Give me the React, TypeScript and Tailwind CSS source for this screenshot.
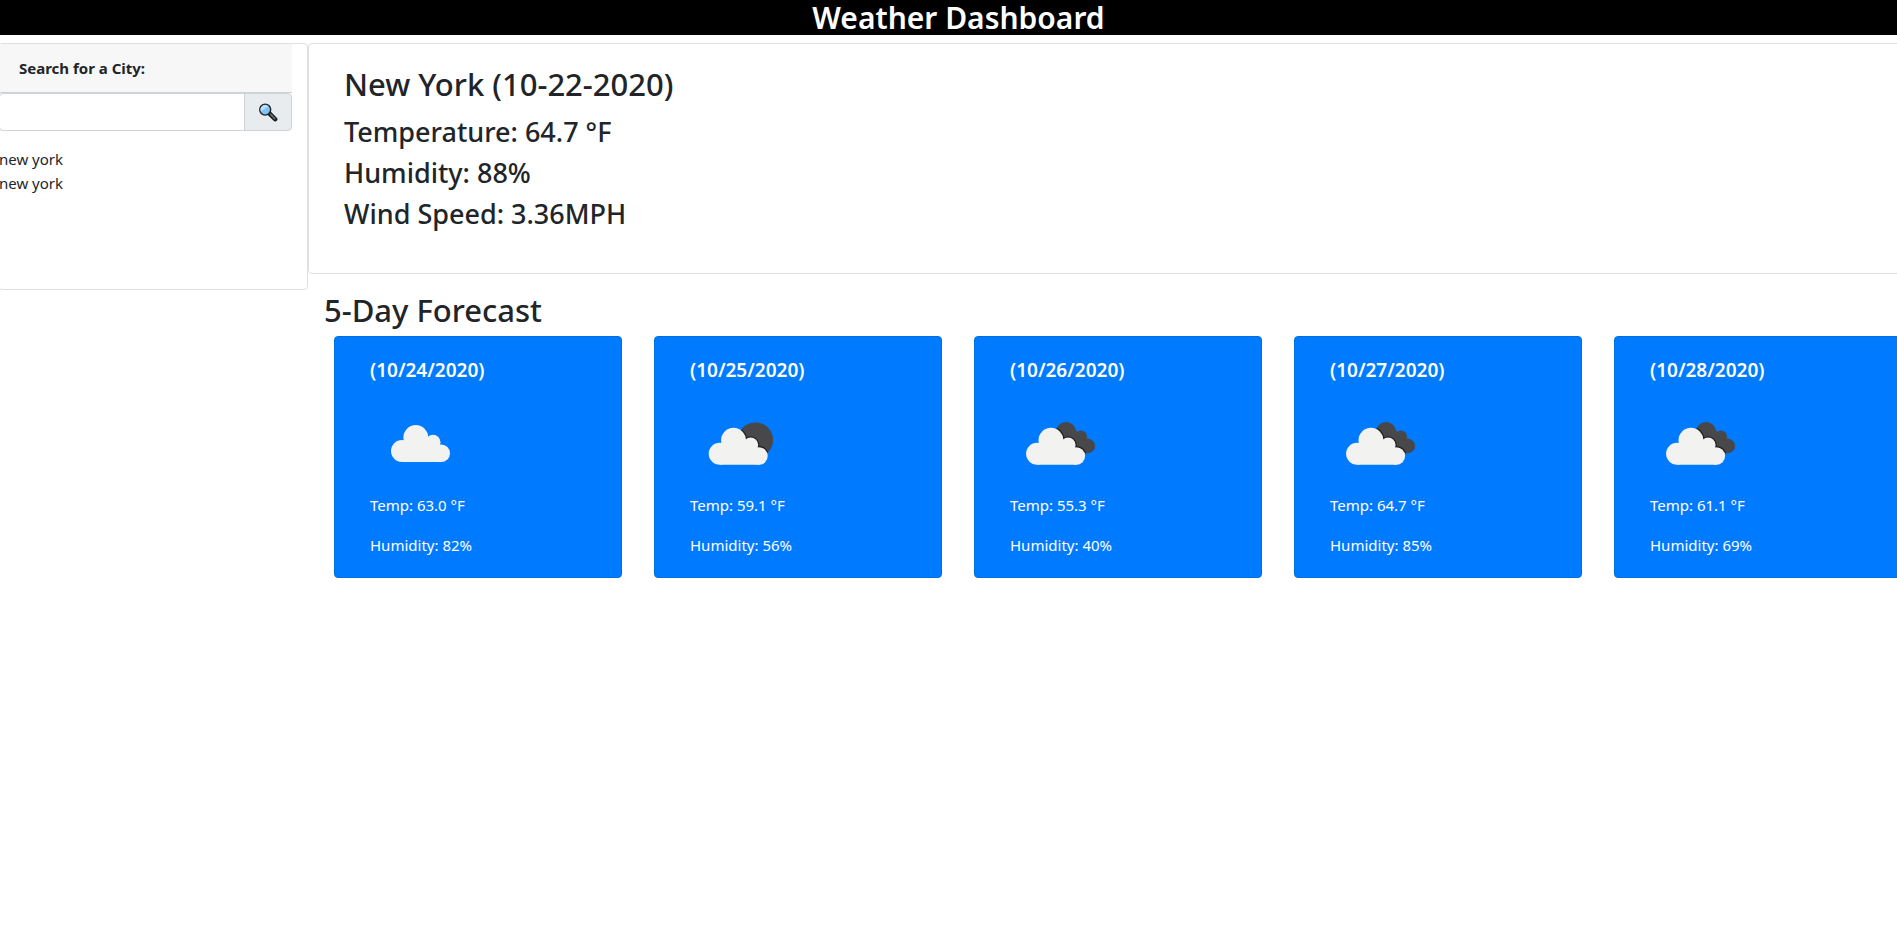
import { useState } from "react";

type Sky = "cloud" | "sun" | "broken";

const days: { date: string; sky: Sky; temp: string; humidity: string }[] = [
  { date: "(10/24/2020)", sky: "cloud", temp: "63.0", humidity: "82" },
  { date: "(10/25/2020)", sky: "sun", temp: "59.1", humidity: "56" },
  { date: "(10/26/2020)", sky: "broken", temp: "55.3", humidity: "40" },
  { date: "(10/27/2020)", sky: "broken", temp: "64.7", humidity: "85" },
  { date: "(10/28/2020)", sky: "broken", temp: "61.1", humidity: "69" },
];

function CloudShape() {
  return (
    <>
      <circle cx="32" cy="41" r="11" />
      <circle cx="45.8" cy="27.4" r="12.4" />
      <circle cx="63" cy="32.3" r="7.5" />
      <circle cx="71.2" cy="43.2" r="8.8" />
      <path d="M32 52V32H46L57 26L66 34L72 40V52Z" />
    </>
  );
}

function BackShape({ sky }: { sky: Sky }) {
  if (sky === "sun") return <circle cx="65.5" cy="30" r="17.6" />;
  return (
    <>
      <circle cx="56" cy="22.2" r="10.2" />
      <circle cx="70.8" cy="26.8" r="6.3" />
      <circle cx="78" cy="36" r="7.2" />
      <path d="M56 22L66 20L73 32L78 36V43.2H56Z" />
    </>
  );
}

function SkyIcon({ sky }: { sky: Sky }) {
  const offset =
    sky === "cloud" ? "translate(0 0)" : sky === "sun" ? "translate(-2.3 2.8)" : "translate(-4.9 2.8)";
  return (
    <svg width="100" height="70" viewBox="0 0 100 70" aria-hidden="true" className="block">
      {sky !== "cloud" && (
        <>
          <clipPath id={"back-" + sky}>
            <BackShape sky={sky} />
          </clipPath>
          <g fill="#48484a">
            <BackShape sky={sky} />
          </g>
          <g clipPath={"url(#back-" + sky + ")"}>
            <g transform={offset} fill="#222" stroke="#222" strokeWidth="2.6">
              <CloudShape />
            </g>
          </g>
        </>
      )}
      <g transform={offset} fill="#f2f2f0">
        <CloudShape />
      </g>
    </svg>
  );
}

function Magnifier() {
  return (
    <svg width="20" height="20" viewBox="0 0 20 20" aria-hidden="true">
      <path d="M11.6 11.6L17.2 17.2" stroke="#151515" strokeWidth="4.4" strokeLinecap="round" />
      <path d="M12.6 12.4L16.8 16.6" stroke="#5f706d" strokeWidth="2" strokeLinecap="round" />
      <circle cx="7.2" cy="7.6" r="5.5" fill="#83c3f3" stroke="#1c2226" strokeWidth="1.4" />
      <path d="M3 9.6A4.6 4.6 0 0 1 10.2 4.2Z" fill="#b9dffa" />
    </svg>
  );
}

export default function App() {
  const [city, setCity] = useState("");
  return (
    <div className="min-h-screen overflow-hidden bg-white font-['Noto_Sans','Open_Sans',sans-serif] text-[15px] leading-6 text-[#212529]">
      <header className="mb-2 bg-black pl-5 text-center text-white">
        <h1 className="text-[30px] leading-[35px] font-semibold">Weather Dashboard</h1>
      </header>

      <div className="flex items-start">
        <aside className="-ml-0.5 h-[247px] w-[310px] shrink-0 rounded border border-[#dfdfdf] pr-[15px]">
          <form onSubmit={(e) => e.preventDefault()}>
            <div className="border-b border-[#d0d2d4] bg-[#f7f7f7] px-5 py-3 font-bold">
              <label htmlFor="city">Search for a City:</label>
            </div>
            <div className="flex h-[38px]">
              <input
                id="city"
                value={city}
                onChange={(e) => setCity(e.target.value)}
                className="min-w-0 flex-1 rounded-l border border-[#ced4da] px-3 outline-none"
              />
              <button
                type="submit"
                aria-label="Search"
                className="-ml-px flex w-12 items-center justify-center rounded-r border border-[#ced4da] bg-[#e9ecef]"
              >
                <Magnifier />
              </button>
            </div>
          </form>
          <ul className="mt-4">
            <li>new york</li>
            <li>new york</li>
          </ul>
        </aside>

        <main className="min-w-0 flex-1">
          <section className="-mr-1 h-[231px] rounded border border-[#dfdfdf] px-[35px] py-[21px] font-medium">
            <h2 className="mb-3 text-[31px] leading-[38px]">New York (10-22-2020)</h2>
            <p className="mb-2 text-[27px] leading-[33px]">Temperature: 64.7 °F</p>
            <p className="mb-2 text-[27px] leading-[33px]">Humidity: 88%</p>
            <p className="text-[27px] leading-[33px]">Wind Speed: 3.36MPH</p>
          </section>

          <section className="pt-[17px] pl-4">
            <h2 className="mb-[7px] text-[31px] leading-[38px] font-medium">5-Day Forecast</h2>
            <div className="flex gap-8 pl-2.5">
              {days.map((day) => (
                <article
                  key={day.date}
                  className="w-[288px] shrink-0 rounded border border-[#006fe0] bg-[#007bff] px-[35px] pt-[21px] pb-5 text-white"
                >
                  <h3 className="mb-7 text-[19px] leading-6 font-semibold">{day.date}</h3>
                  <SkyIcon sky={day.sky} />
                  <p className="mt-[13px] mb-4">Temp: {day.temp} °F</p>
                  <p>Humidity: {day.humidity}%</p>
                </article>
              ))}
            </div>
          </section>
        </main>
      </div>
    </div>
  );
}
